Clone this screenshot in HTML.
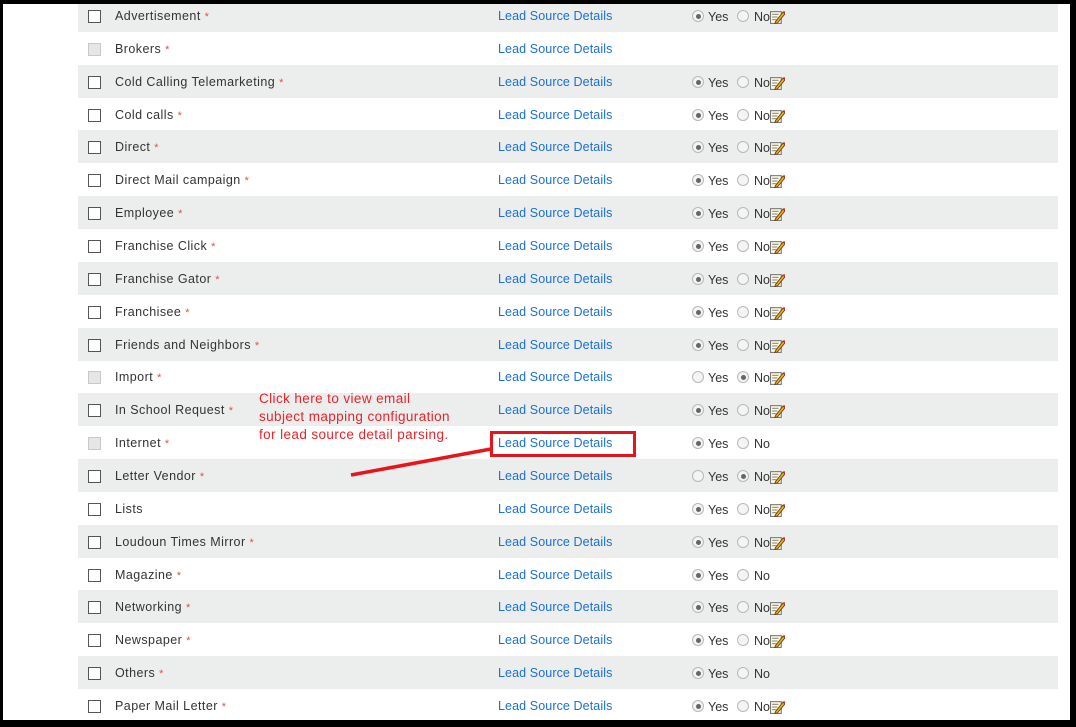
<!DOCTYPE html>
<html><head><style>
body{margin:0;width:1076px;height:727px;overflow:hidden;background:#000;position:relative;font-family:"Liberation Sans",Arial,sans-serif;font-size:12.5px;color:#333}
#w{position:absolute;left:3px;top:4px;width:1067px;height:716px;background:#fff;overflow:hidden}
.r{position:absolute;left:75px;width:980px;height:33px}
.s{background:#eceeed}
.cb{position:absolute;left:10px;top:11px;width:11px;height:11px;border:1px solid #555;background:#fff}
.cb.d{border-color:#c8c8c8;background:#e6e6e6}
.l{position:absolute;left:37px;top:10px;letter-spacing:0.45px}
.st{color:#d9534f;font-size:11px}
.k{position:absolute;left:420px;top:10px;color:#1a6fd8;letter-spacing:0.1px}
.ra{position:absolute;top:11px;width:12px;height:12px;border:1px solid #b8b8b8;border-radius:50%;background:#f4f4f4;box-sizing:border-box}
.ra.on::after{content:"";position:absolute;left:2.5px;top:2.5px;width:5px;height:5px;border-radius:50%;background:#666}
.t{position:absolute;top:11px}
.ic{position:absolute;left:692px;top:11px;width:15px;height:14px}
.ann{position:absolute;left:256px;top:386px;color:#e8232a;font-size:13.5px;line-height:18px;letter-spacing:0.4px}
</style></head><body><div id="w">
<div id="rows"></div>
<div class="ann">Click here to view email<br>subject mapping configuration<br>for lead source detail parsing.</div>
<div style="position:absolute;left:487px;top:427px;width:140px;height:20px;border:3.5px solid #e8141c"></div>
<svg style="position:absolute;left:0;top:0" width="1067" height="716"><line x1="348" y1="471" x2="488" y2="445" stroke="#e8141c" stroke-width="3.5"/></svg>
</div>
<script>
var d=[["Advertisement",1,0,"y",1],["Brokers",1,1,"",0],["Cold Calling Telemarketing",1,0,"y",1],["Cold calls",1,0,"y",1],["Direct",1,0,"y",1],["Direct Mail campaign",1,0,"y",1],["Employee",1,0,"y",1],["Franchise Click",1,0,"y",1],["Franchise Gator",1,0,"y",1],["Franchisee",1,0,"y",1],["Friends and Neighbors",1,0,"y",1],["Import",1,1,"n",1],["In School Request",1,0,"y",1],["Internet",1,1,"y",0],["Letter Vendor",1,0,"n",1],["Lists",0,0,"y",1],["Loudoun Times Mirror",1,0,"y",1],["Magazine",1,0,"y",0],["Networking",1,0,"y",1],["Newspaper",1,0,"y",1],["Others",1,0,"y",0],["Paper Mail Letter",1,0,"y",1]];
var h="";
var icon='<svg class="ic" viewBox="0 0 14 13"><rect x="0.5" y="1.5" width="10" height="11" fill="#fffbe0" stroke="#777"/><line x1="2" y1="4" x2="8" y2="4" stroke="#888"/><line x1="2" y1="6.5" x2="7" y2="6.5" stroke="#888"/><line x1="2" y1="9" x2="6" y2="9" stroke="#888"/><path d="M5 11 L12 2 L14 3.5 L7 12 L4.5 12.5Z" fill="#e8b21c" stroke="#6b3a10" stroke-width="0.8"/><path d="M12 2 L14 3.5 L14.5 2 L13 0.8Z" fill="#c0392b"/></svg>';
d.forEach(function(r,i){var top=Math.round(-5+i*32.86);
h+='<div class="r'+(i%2==0?' s':'')+'" style="top:'+top+'px"><div class="cb'+(r[2]?' d':'')+'"></div><div class="l">'+r[0]+(r[1]?' <span class="st">*</span>':'')+'</div><div class="k">Lead Source Details</div>';
if(r[3]){h+='<div class="ra'+(r[3]=="y"?' on':'')+'" style="left:614px"></div><div class="t" style="left:630px">Yes</div><div class="ra'+(r[3]=="n"?' on':'')+'" style="left:659px"></div><div class="t" style="left:676px">No</div>';if(r[4])h+=icon;}
h+='</div>';});
document.getElementById("rows").innerHTML=h;
</script>
</body></html>
